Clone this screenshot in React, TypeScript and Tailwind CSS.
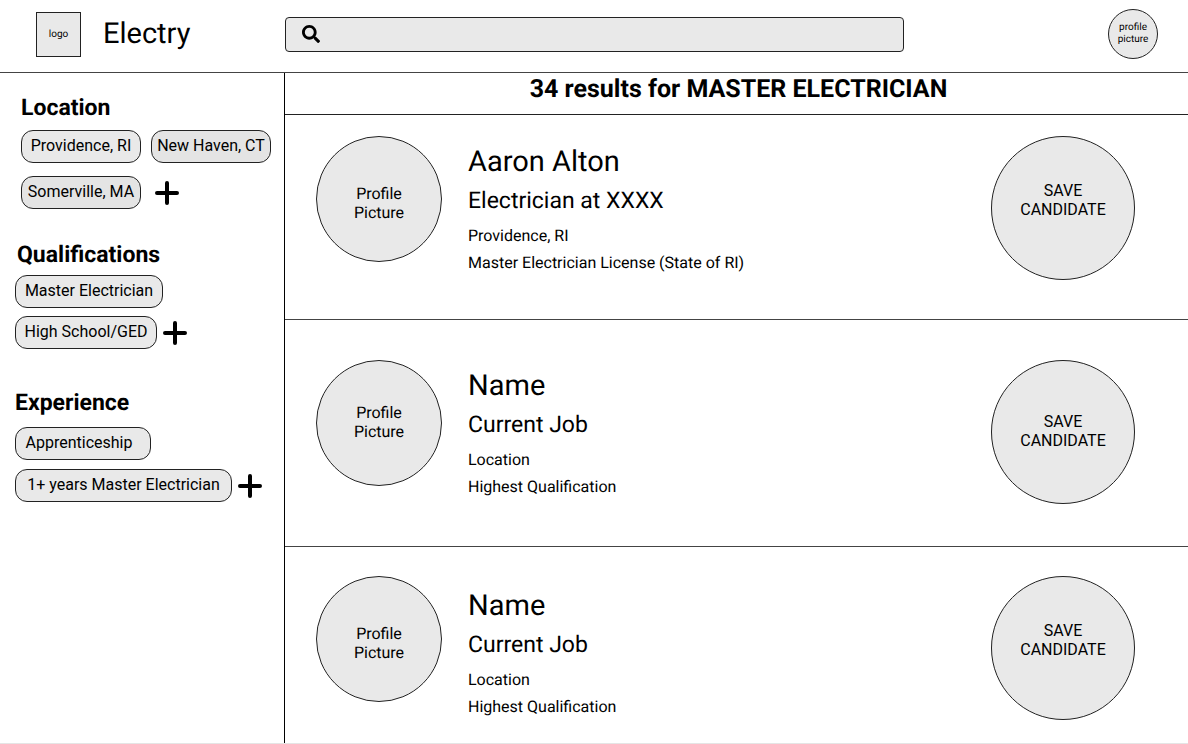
import { FaSearch } from "react-icons/fa";

type Candidate = {
  name: string;
  job: string;
  location: string;
  qualification: string;
  rowClass: string;
  pictureClass: string;
  textClass: string;
  saveClass: string;
};

const candidates: Candidate[] = [
  {
    name: "Aaron Alton",
    job: "Electrician at XXXX",
    location: "Providence, RI",
    qualification: "Master Electrician License (State of RI)",
    rowClass: "min-h-[205px] border-b pt-[21px]",
    pictureClass: "pt-2",
    textClass: "pt-2",
    saveClass: "pb-4",
  },
  {
    name: "Name",
    job: "Current Job",
    location: "Location",
    qualification: "Highest Qualification",
    rowClass: "min-h-[227px] border-b pt-10",
    pictureClass: "pb-[2px]",
    textClass: "pt-2",
    saveClass: "pb-[2px]",
  },
  {
    name: "Name",
    job: "Current Job",
    location: "Location",
    qualification: "Highest Qualification",
    rowClass: "pt-[29px]",
    pictureClass: "pt-2",
    textClass: "pt-3",
    saveClass: "pb-4",
  },
];

function Chip({ label, className }: { label: string; className: string }) {
  return (
    <button
      type="button"
      className={`h-[33px] shrink-0 whitespace-nowrap rounded-xl border border-[#222] pb-px text-base leading-5 ${className}`}
    >
      {label}
    </button>
  );
}

function AddButton({ label }: { label: string }) {
  return (
    <button type="button" aria-label={label} className="shrink-0">
      <svg viewBox="0 0 26 26" className="size-[26px]" fill="none" stroke="black" strokeWidth="4" strokeLinecap="round">
        <path d="M13 3v20M3 13h20" />
      </svg>
    </button>
  );
}

function CandidateRow({ candidate }: { candidate: Candidate }) {
  return (
    <li className={`flex items-start border-[#444] pr-[53px] pl-[31px] ${candidate.rowClass}`}>
      <div
        className={`flex size-[126px] shrink-0 items-center justify-center rounded-full border border-[#222] bg-[#e9e9e9] text-center text-base leading-[19px] ${candidate.pictureClass}`}
      >
        Profile
        <br />
        Picture
      </div>
      <div className={`ml-[26px] min-w-0 flex-1 ${candidate.textClass}`}>
        <h2 className="text-[29px] leading-9">{candidate.name}</h2>
        <p className="mt-[5px] text-[23px] leading-8">{candidate.job}</p>
        <p className="mt-[9px] text-base leading-5">{candidate.location}</p>
        <p className="mt-[7px] text-base leading-5">{candidate.qualification}</p>
      </div>
      <button
        type="button"
        className={`flex size-36 shrink-0 items-center justify-center rounded-full border border-[#222] bg-[#e9e9e9] text-center text-base leading-[19px] ${candidate.saveClass}`}
      >
        SAVE
        <br />
        CANDIDATE
      </button>
    </li>
  );
}

export default function App() {
  return (
    <div className="flex min-h-screen flex-col border-b border-[#e5e5e5] bg-white font-['Roboto',sans-serif] text-black [text-rendering:geometricPrecision]">
      <header className="flex h-[73px] items-center border-b border-[#444] pr-[30px] pb-1">
        <a href="#" className="flex w-[285px] shrink-0 items-center pl-9">
          <span className="flex size-[45px] items-center justify-center border border-[#222] bg-[#e9e9e9] text-[10px]">logo</span>
          <span className="ml-[22px] text-[29px] leading-9">Electry</span>
        </a>
        <label className="mr-51 flex h-[35px] flex-1 items-center rounded border border-[#222] bg-[#e9e9e9] pl-4">
          <FaSearch className="size-[18px]" aria-hidden="true" />
          <input type="search" aria-label="Search" className="ml-3 min-w-0 flex-1 bg-transparent outline-none" />
        </label>
        <a
          href="#"
          className="flex size-[50px] shrink-0 items-center justify-center rounded-full border border-[#222] bg-[#e9e9e9] text-center text-[10px] leading-3"
        >
          profile
          <br />
          picture
        </a>
      </header>

      <div className="flex flex-1">
        <aside className="w-[285px] shrink-0 border-r border-black pl-[15px]">
          <section className="pt-[21px] pl-[6px]">
            <h2 className="text-[23px] leading-7 font-bold">Location</h2>
            <div className="mt-2 flex gap-[10px]">
              <Chip label="Providence, RI" className="w-30 bg-[#e9e9e9]" />
              <Chip label="New Haven, CT" className="w-30 bg-[#e4e4e4]" />
            </div>
            <div className="mt-[13px] flex items-center gap-[13px]">
              <Chip label="Somerville, MA" className="w-30 bg-[#e4e4e4]" />
              <AddButton label="Add location" />
            </div>
          </section>

          <section className="pt-8">
            <h2 className="pl-[2px] text-[23px] leading-7 font-bold">Qualifications</h2>
            <div className="mt-[6px] flex">
              <Chip label="Master Electrician" className="w-37 bg-[#e9e9e9]" />
            </div>
            <div className="mt-2 flex items-center gap-[5px]">
              <Chip label="High School/GED" className="w-[142px] bg-[#e9e9e9]" />
              <AddButton label="Add qualification" />
            </div>
          </section>

          <section className="pt-10">
            <h2 className="text-[23px] leading-7 font-bold">Experience</h2>
            <div className="mt-[10px] flex">
              <Chip label="Apprenticeship" className="w-34 bg-[#e9e9e9] pr-2" />
            </div>
            <div className="mt-[9px] flex items-center gap-[5px]">
              <Chip label="1+ years Master Electrician" className="w-[217px] bg-[#e9e9e9]" />
              <AddButton label="Add experience" />
            </div>
          </section>
        </aside>

        <main className="min-w-0 flex-1">
          <h1 className="flex h-[42px] justify-center border-b border-[#222] pt-[3px] pl-1 text-[25px] leading-7 font-bold">
            34 results for MASTER ELECTRICIAN
          </h1>
          <ul>
            {candidates.map((candidate, index) => (
              <CandidateRow key={index} candidate={candidate} />
            ))}
          </ul>
        </main>
      </div>
    </div>
  );
}
